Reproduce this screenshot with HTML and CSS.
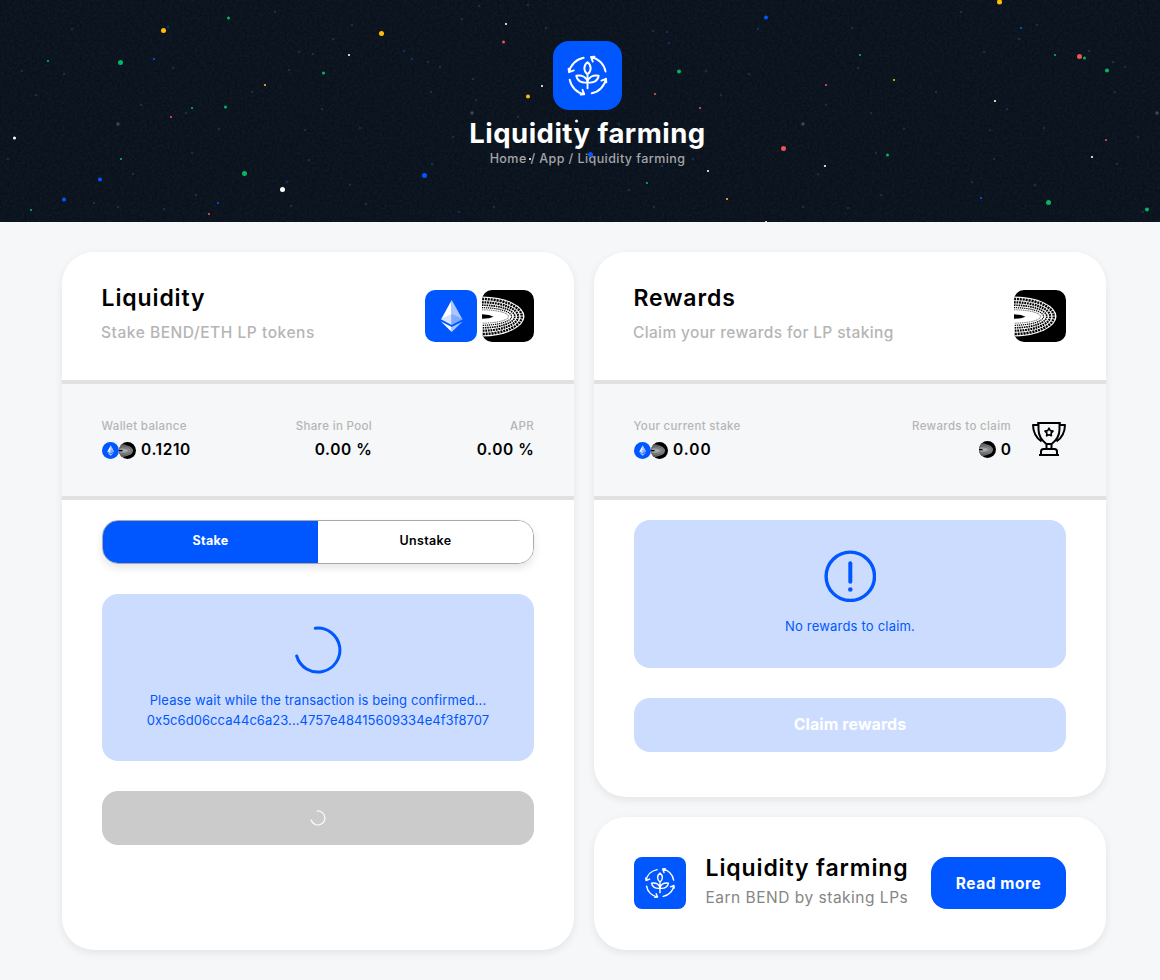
FILE: index.html
```html
<!DOCTYPE html>
<html lang="en">
<head>
<meta charset="utf-8">
<title>Liquidity farming</title>
<link rel="stylesheet" href="styles.css">
</head>
<body>
<svg class="defs" width="0" height="0" aria-hidden="true">
  <symbol id="farm" viewBox="0 0 69 69">
    <g fill="none" stroke="#fff" stroke-width="1.9" stroke-linecap="round" stroke-linejoin="round">
      <path d="M30.700 16.800A18.300 18.300 0 0 0 16 31.200M16 31.200l-.4-3.500M16 31.200l4.800-1.800"/>
      <path d="M52.600 30.600A18.300 18.300 0 0 0 38 16M38 16l3.500-.4M38 16l1.800 4.600"/>
      <path d="M38.700 52.300A18.300 18.300 0 0 0 53 37.800M53 37.800l.3 3.500M53 37.800l-4.600 1.800"/>
      <path d="M16.700 38.800A18.300 18.300 0 0 0 31.200 53.200M31.200 53.200l-3.500.4M31.200 53.200l-1.700-4.400"/>
      <path d="M34.500 47.300V33.300M34.500 33.300c-4.200-3-4.200-9 0-12 4.200 3 4.200 9 0 12zM34.500 41.500c-6 .8-10.500-1.500-11.200-6.800 6-1 10.500 1.500 11.200 6.800zM34.500 41.500c6 .8 10.500-1.500 11.200-6.800-6-1-10.500 1.500-11.200 6.800z"/>
    </g>
  </symbol>
  <symbol id="eth" viewBox="0 0 52 52">
    <rect width="52" height="52" fill="#0057ff"/>
    <path fill="#fff" d="M26.700 10v14.600L16 29.500z"/>
    <path fill="#a9c6ff" d="M26.700 10v14.600l10.900 4.900z"/>
    <path fill="#d6e4ff" d="M26.700 24v11L16 29.300z"/>
    <path fill="#7da9ff" d="M26.700 24v11l10.900-5.700z"/>
    <path fill="#fff" d="M16 31.400l10.700 5.700v5z"/>
    <path fill="#a9c6ff" d="M37.600 31.400l-10.900 5.700v5z"/>
  </symbol>
  <symbol id="bend" viewBox="0 0 52 52">
    <rect width="52" height="52"/>
    <ellipse cx="0" cy="26.500" rx="42.500" ry="19.900" fill="#fff"/>
    <g fill="none" stroke="#000">
      <ellipse cx="0" cy="26.500" rx="39.800" ry="17.500" stroke-width="2.400" pathLength="64" stroke-dasharray=".72 .28"/>
      <ellipse cx="0" cy="26.500" rx="36.200" ry="14.200" stroke-width="2.200" pathLength="64" stroke-dasharray=".7 .3"/>
      <ellipse cx="0" cy="26.500" rx="32.800" ry="11.300" stroke-width="1.700" pathLength="64" stroke-dasharray=".68 .32"/>
      <ellipse cx="0" cy="26.500" rx="29.600" ry="8.800" stroke-width="1.200" pathLength="64" stroke-dasharray=".62 .38"/>
      <ellipse cx="0" cy="26.500" rx="26.500" ry="6.700" stroke-width=".7" pathLength="64" stroke-dasharray=".55 .45"/>
    </g>
    <path d="M0 24.300l7 .7 4.500 1.700-4.500 1.500-7 .6z"/>
  </symbol>
  <symbol id="bend-small" viewBox="0 0 17 17">
    <radialGradient id="glow" cx=".7" cy=".5" r=".4"><stop offset="0" stop-color="#b4b4b4"/><stop offset="1" stop-color="#686868"/></radialGradient>
    <rect width="17" height="17"/>
    <ellipse cx="0" cy="8.700" rx="14" ry="6.600" fill="url(#glow)"/>
    <g fill="none" stroke="#222" stroke-width=".4" opacity=".6">
      <ellipse cx="0" cy="8.700" rx="12.300" ry="5"/>
      <ellipse cx="0" cy="8.700" rx="10" ry="3.300"/>
    </g>
    <path d="M0 8h3.500v1.200H0z"/>
  </symbol>
</svg>

<header class="hero">
  <svg class="sky" viewBox="0 0 1160 222" aria-hidden="true">
    <filter id="grain" x="0" y="0" width="100%" height="100%">
      <feTurbulence type="fractalNoise" baseFrequency=".4" numOctaves="2" seed="4"/>
      <feColorMatrix values="0 0 0 0 .2  0 0 0 0 .28  0 0 0 0 .4  .12 0 0 0 -.035"/>
    </filter>
    <rect width="1160" height="222" filter="url(#grain)"/>
    <g id="dust"></g>
  </svg>
  <div class="hero-content">
    <svg class="hero-icon"><use href="#farm"/></svg>
    <h1>Liquidity farming</h1>
    <nav>Home / App / Liquidity farming</nav>
  </div>
  <svg class="sky stars" viewBox="0 0 1160 222" aria-hidden="true"><g id="stars"></g></svg>
</header>

<main>
  <section class="card card-liquidity">
    <div class="card-head">
      <div>
        <h2>Liquidity</h2>
        <p class="stake-subtitle">Stake BEND/ETH LP tokens</p>
      </div>
      <div class="tokens">
        <svg class="token"><use href="#eth"/></svg>
        <svg class="token"><use href="#bend"/></svg>
      </div>
    </div>
    <div class="stats">
      <div class="stat">
        <span class="label">Wallet balance</span>
        <span class="value"><svg class="coin"><use href="#eth"/></svg><svg class="coin"><use href="#bend-small"/></svg><b>0.1210</b></span>
      </div>
      <div class="stat right">
        <span class="label">Share in Pool</span>
        <span class="value"><b>0.00 %</b></span>
      </div>
      <div class="stat right">
        <span class="label">APR</span>
        <span class="value"><b>0.00 %</b></span>
      </div>
    </div>
    <div class="card-body">
      <div class="tabs">
        <button class="tab active">Stake</button>
        <button class="tab">Unstake</button>
      </div>
      <div class="notice waiting">
        <svg class="spinner" viewBox="0 0 48 48"><path d="M21.300 2.200A22 22 0 1 1 2.700 30" fill="none" stroke="#0057ff" stroke-width="3" stroke-linecap="round"/></svg>
        <p>Please wait while the transaction is being confirmed...<br><span class="hash">0x5c6d06cca44c6a23...4757e48415609334e4f3f8707</span></p>
      </div>
      <button class="action busy"><svg width="16" height="16" viewBox="0 0 48 48"><path d="M21.300 3A21 21 0 1 1 3.500 30" fill="none" stroke="#fff" stroke-width="3.500" stroke-linecap="round"/></svg></button>
    </div>
  </section>

  <div class="column">
    <section class="card card-rewards">
      <div class="card-head">
        <div>
          <h2>Rewards</h2>
          <p>Claim your rewards for LP staking</p>
        </div>
        <svg class="token"><use href="#bend"/></svg>
      </div>
      <div class="stats">
        <div class="stat">
          <span class="label">Your current stake</span>
          <span class="value"><svg class="coin"><use href="#eth"/></svg><svg class="coin"><use href="#bend-small"/></svg><b class="stake-value">0.00</b></span>
        </div>
        <div class="claimable">
          <div class="stat right">
            <span class="label">Rewards to claim</span>
            <span class="value"><svg class="coin coin-raised"><use href="#bend-small"/></svg><b>0</b></span>
          </div>
          <svg class="trophy" viewBox="0 0 34 34" fill="none" stroke="#000" stroke-width="2" stroke-linejoin="round">
            <path d="M5.200 1h23.600M6.500 1v6.500c0 7.500 4 11.500 7.800 14.500h5.400c3.800-3 7.800-7 7.800-14.500V1M6.300 3H1c.2 7.500 3.200 13 8.500 16.300M27.700 3H33c-.2 7.500-3.200 13-8.500 16.300M14.500 22v5M19.500 22v5M9 32.500v-2.800c0-2 .8-2.700 2.500-2.700h11c1.700 0 2.500.7 2.500 2.700v2.800M7 33h20"/>
            <path stroke-width="1.600" d="M17 6.200l1.300 2.400 2.700.5-1.900 2 .3 2.700-2.400-1.100-2.400 1.100.3-2.700-1.900-2 2.700-.5z"/>
          </svg>
        </div>
      </div>
      <div class="card-body">
        <div class="notice empty">
          <svg class="alert" viewBox="0 0 52 52"><circle cx="26.300" cy="26.300" r="24.200" fill="none" stroke="#0057ff" stroke-width="3.400"/><path d="M26.300 13.300v18.400" stroke="#0057ff" stroke-width="4" stroke-linecap="round"/><circle cx="26.300" cy="39.500" r="2.300" fill="#0057ff"/></svg>
          <p>No rewards to claim.</p>
        </div>
        <button class="action claim">Claim rewards</button>
      </div>
    </section>

    <section class="card promo">
      <svg class="promo-icon"><use href="#farm"/></svg>
      <div class="promo-text">
        <h2>Liquidity farming</h2>
        <p>Earn BEND by staking LPs</p>
      </div>
      <button class="read">Read more</button>
    </section>
  </div>
</main>
<script src="stars.js"></script>
</body>
</html>
```
FILE: styles.css
```css
* { box-sizing: border-box; }
body {
  margin: 0;
  width: 1160px;
  height: 980px;
  overflow: hidden;
  background: #f5f7f9;
  color: #000;
  font-family: Inter, "Open Sans", sans-serif;
}
h1, h2, p { margin: 0; }
svg { display: block; flex: none; }
button { font: inherit; border: 0; padding: 0; }
.defs { position: absolute; }
.hero {
  position: relative;
  height: 222px;
  background: #09111c;
  overflow: hidden;
}
.sky { position: absolute; left: 0; top: 0; width: 1160px; height: 222px; }
.hero-content {
  position: relative;
  width: 1175px;
  padding-top: 41px;
  display: flex;
  flex-direction: column;
  align-items: center;
}
.hero-icon { width: 69px; height: 69px; border-radius: 16px; background: #0057ff; }
h1 { margin-top: 6px; font-size: 27.5px; line-height: 34px; letter-spacing: .48px; font-weight: 700; color: #fff; white-space: nowrap; }
nav { margin-top: 1px; font-size: 12.5px; line-height: 16px; letter-spacing: .43px; font-weight: 500; color: #a6a6a8; white-space: nowrap; }

main {
  display: grid;
  grid-template-columns: 512px 512px;
  gap: 20px;
  padding: 30px 0 0 62px;
}
.column { display: flex; flex-direction: column; gap: 20px; }
.card { background: #fff; border-radius: 32px; box-shadow: 0 3px 8px rgba(0, 0, 0, .08); overflow: hidden; }
.card-liquidity { height: 698px; }
.card-rewards { height: 545px; }
.card-head {
  height: 128px;
  padding: 32px 40px 0;
  display: flex;
  justify-content: space-between;
}
h2 { margin-left: -.5px; font-size: 23px; line-height: 28px; letter-spacing: .88px; font-weight: 600; white-space: nowrap; }
.card-head p { margin: 11px 0 0 -1px; font-size: 15.5px; line-height: 20px; letter-spacing: .35px; font-weight: 500; color: #b5b5b5; white-space: nowrap; }
.card-head .stake-subtitle { letter-spacing: .54px; }
.tokens { display: flex; gap: 5px; }
.token { width: 52px; height: 52px; border-radius: 10px; margin-top: 6px; }
.stats {
  height: 120px;
  border-top: 4px solid #e1e1e1;
  border-bottom: 4px solid #e1e1e1;
  background: #f5f7f9;
  padding: 34px 40px 0;
  display: flex;
  justify-content: space-between;
}
.card-liquidity .stats { display: grid; grid-template-columns: 1fr 162px 162px; }
.stat { display: flex; flex-direction: column; gap: 5px; white-space: nowrap; }
.right { align-items: flex-end; }
.label { margin-left: -.5px; font-size: 11.5px; line-height: 16px; letter-spacing: .34px; font-weight: 500; color: #b5b5b5; }
.value { display: flex; align-items: center; height: 22px; font-size: 15.5px; line-height: 20px; }
.value b { font-weight: 600; letter-spacing: .6px; padding-bottom: 1px; }
.value .stake-value { letter-spacing: 1px; }
.right .value b { margin-right: -.5px; }
.coin { width: 17px; height: 17px; border-radius: 50%; }
.coin-raised { margin-bottom: 1px; }
.value .coin + b { margin-left: 5px; }
.claimable { display: flex; gap: 21px; }
.trophy { width: 34px; height: 34px; margin-top: 4px; }
.card-body { padding: 20px 40px 0; }
.tabs {
  height: 44px;
  display: flex;
  border: 1px solid #a9a9a9;
  border-radius: 16px;
  overflow: hidden;
  box-shadow: 0 4px 8px rgba(0, 0, 0, .1);
}
.tab { flex: 1; background: #fff; color: #000; font-size: 12.5px; letter-spacing: .35px; font-weight: 600; padding-bottom: 3px; }
.tab.active { background: #0057ff; color: #fff; font-weight: 700; }
.notice {
  background: #ccdcff;
  border-radius: 16px;
  display: flex;
  flex-direction: column;
  align-items: center;
  color: #0057ff;
  font-size: 13px;
  line-height: 20px;
  letter-spacing: .11px;
  text-align: center;
  white-space: nowrap;
}
.waiting { margin-top: 30px; height: 167px; padding-top: 32px; }
.waiting p { margin-top: 16px; }
.hash { letter-spacing: .05px; }
.spinner { width: 48px; height: 48px; }
.empty { height: 148px; padding-top: 30px; }
.empty p { margin-top: 14px; letter-spacing: .2px; }
.alert { width: 52px; height: 52px; }
.action {
  display: flex;
  align-items: center;
  justify-content: center;
  width: 432px;
  height: 54px;
  margin-top: 30px;
  border-radius: 16px;
  font-size: 16px;
  letter-spacing: .08px;
  font-weight: 700;
}
.busy { background: #cbcbcb; }
.claim { background: #ccdcff; color: #fff; padding-bottom: 2px; }
.promo { height: 133px; padding: 40px; display: flex; }
.promo-icon { width: 52px; height: 52px; border-radius: 8px; background: #0057ff; }
.promo-text { margin: -3px 0 0 20px; }
.promo-text p { margin: 6px 0 0 -.5px; font-size: 15.5px; line-height: 20px; letter-spacing: .5px; color: #858585; white-space: nowrap; }
.read { width: 135px; height: 52px; margin-left: auto; border-radius: 16px; background: #0057ff; color: #fff; font-size: 15.5px; letter-spacing: .55px; font-weight: 700; }
```
FILE: stars.js
```js
const colors = { y: '#ffbf00', g: '#00b95f', b: '#0057ff', w: '#fff', r: '#ee5253' };
// x, y, size, colour
const stars = [
  [163.5,30.5,5,'y'],[228.5,18,3,'g'],[381.5,33.5,5,'y'],[48,61,2,'g'],[120.5,62.5,5,'g'],[154,59,2,'b'],
  [349,55,2,'w'],[323.5,73,3,'g'],[265,85,2,'y'],[192,108,2,'g'],[225.5,107,3,'g'],[171,117,2,'r'],
  [14.5,138,3,'w'],[121,159,2,'g'],[100,179.5,4,'b'],[64,199.5,4,'b'],[31,210,2,'g'],[244.5,173.5,5,'g'],
  [282.5,189.5,5,'w'],[218,203,2,'b'],[209,214,2,'r'],
  [506,24,2,'w'],[503.5,42,3,'r'],[528,96.5,4,'y'],[542,86,2,'w'],[576.5,121,3,'w'],[590.5,154.5,5,'b'],
  [530,159,2,'w'],[424.5,175.5,5,'b'],[766,17.5,4,'b'],[679,71.5,4,'g'],[655,94,2,'r'],[700,108,2,'r'],
  [708,171,2,'w'],[647,183,2,'g'],[727,199,2,'y'],[766,222,2,'w'],
  [999.5,2,5,'y'],[860,55,2,'g'],[1021,28,2,'b'],[1055,55,2,'g'],[1079.5,56.5,5,'r'],[1084.5,58,3,'g'],
  [1107,70.5,4,'g'],[894,80,2,'y'],[826,85,2,'r'],[995,101,2,'w'],[783.5,148.5,5,'r'],[887.5,155,3,'g'],
  [825,166,2,'w'],[1106,140,2,'r'],[1092,157,2,'w'],[981,198,2,'b'],[1048.5,202.5,5,'g'],[1147,209.5,4,'g']
];
// faint background specks
const dust = [
  [22,71],[36,95],[64,74],[72,29],[8,159],[141,105],[133,174],[118,207],[94,203],[164,209],[196,195],
  [192,153],[186,113],[219,129],[173,68],[168,27],[252,92],[287,182],[291,206],[309,160],[305,130],[322,109],[350,185],
  [366,204],[360,128],[299,52],[313,54],[333,39],[352,25],[275,12],[289,70],[404,51],[412,59],[428,62],[440,67],
  [473,79],[476,100],[431,92],[453,137],[432,164],[494,207],[459,212],[518,117],[546,28],[528,5],[479,6],
  [462,19],[607,157],[693,159],[662,166],[629,190],[654,207],[721,95],[706,71],[749,74],[667,32],[653,31],[669,43],
  [619,124],[758,29],[852,28],[858,68],[826,105],[871,113],[904,129],[876,153],[818,174],[881,195],
  [803,207],[848,208],[936,92],[1007,109],[990,130],[994,159],[972,182],[1035,185],[1044,128],[1138,137],[1117,164],
  [1113,62],[1125,67],[1089,51],[1037,25],[1019,39],[984,52],[961,12],[1115,92],[1143,212]
];
const paleDust = [[118,124],[472,113],[803,124],[1157,113]];
const ns = 'http://www.w3.org/2000/svg';
const draw = (host, tag, attrs) => {
  const el = document.createElementNS(ns, tag);
  for (const k in attrs) el.setAttribute(k, attrs[k]);
  host.append(el);
};
const sky = document.getElementById('stars');
stars.forEach(([x, y, s, c]) => s === 2
  ? draw(sky, 'rect', { x: x - 1, y: y - 1, width: 2, height: 2, fill: colors[c], opacity: .8 })
  : draw(sky, 'circle', { cx: x, cy: y, r: s / 2, fill: colors[c] }));
const haze = document.getElementById('dust');
dust.forEach(([x, y]) => draw(haze, 'circle', { cx: x, cy: y, r: 1.3, fill: '#123f72', opacity: .65 }));
paleDust.forEach(([x, y]) => draw(haze, 'circle', { cx: x, cy: y, r: 1.7, fill: '#3d4a50' }));
```
